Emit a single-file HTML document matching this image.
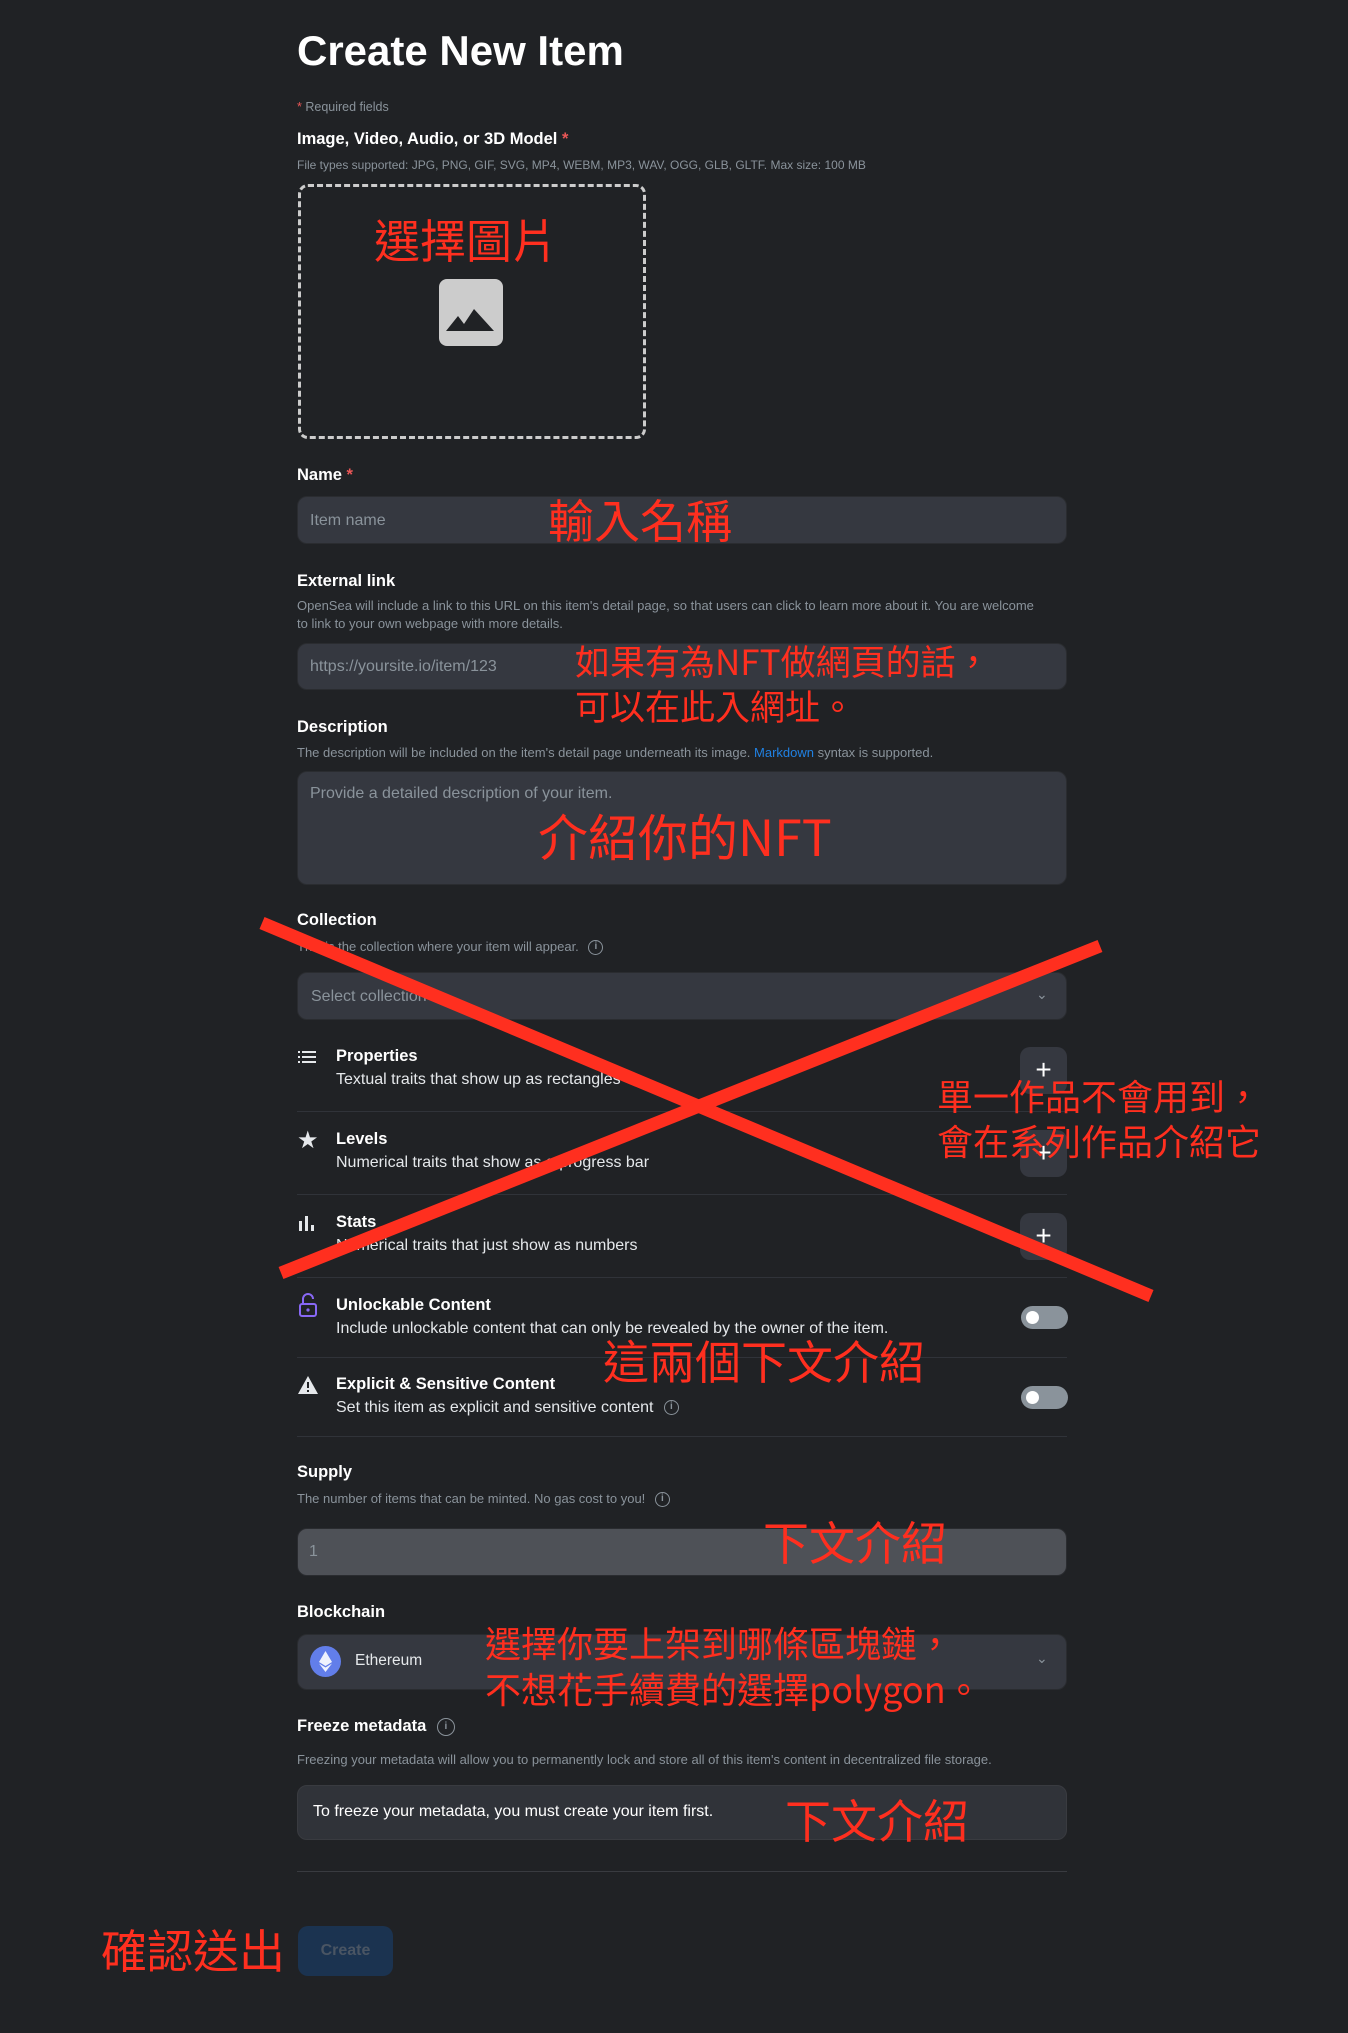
<!DOCTYPE html>
<html><head><meta charset="utf-8">
<style>
*{margin:0;padding:0;box-sizing:border-box}
body{width:1348px;height:2033px;background:#202225;position:relative;overflow:hidden;font-family:"Liberation Sans",sans-serif;color:#e5e8eb}
.a{position:absolute;white-space:nowrap}
.lbl{font-weight:bold;font-size:16.5px;color:#fff}
.sm{font-size:13px;color:#8a939b}
.inp{position:absolute;left:297px;width:770px;background:#353840;border:1px solid #2a2c30;border-radius:10px}
.ph{font-size:16px;color:#8a939b}
.red{position:absolute;white-space:nowrap;color:#ff2f1f;font-family:"Noto Sans CJK TC","Liberation Sans",sans-serif;font-weight:400;line-height:1}
.div{position:absolute;left:297px;width:770px;height:1px;background:#303339}
.rt{font-weight:bold;font-size:16.5px;color:#fff}
.rs{font-size:16px;color:#e5e8eb}
.plus{position:absolute;left:1020px;width:47px;height:47px;background:#353840;border-radius:10px;color:#fff;font-size:28px;text-align:center;line-height:45px}
.tog{position:absolute;left:1021px;width:47px;height:23px;background:#8a939b;border-radius:12px}
.tog:after{content:"";position:absolute;left:5px;top:5px;width:13px;height:13px;border-radius:50%;background:#fff}
.info{display:inline-block;width:15px;height:15px;border:1.5px solid #8a939b;border-radius:50%;font-size:10px;text-align:center;line-height:12px;color:#8a939b;vertical-align:middle;margin-left:6px;font-weight:bold}
</style></head><body>
<div class="a" style="left:297px;top:27px;font-size:42px;font-weight:bold;color:#fff">Create New Item</div>
<div class="a sm" style="left:297px;top:100px;font-size:12.5px"><span style="color:#eb5757">*</span> Required fields</div>
<div class="a lbl" style="left:297px;top:130px">Image, Video, Audio, or 3D Model <span style="color:#eb5757">*</span></div>
<div class="a sm" style="left:297px;top:158px;font-size:12px">File types supported: JPG, PNG, GIF, SVG, MP4, WEBM, MP3, WAV, OGG, GLB, GLTF. Max size: 100 MB</div>
<div class="a" style="left:298px;top:184px;width:348px;height:255px;border:3px dashed #ccc;border-radius:10px"></div>
<svg class="a" style="left:439px;top:279px" width="64" height="67" viewBox="0 0 64 67"><rect width="64" height="67" rx="8" fill="#cccccc"/><path d="M7 52 L19 37 L25 45 L35 30 L55 52 Z" fill="#202225"/></svg>
<div class="red" style="left:374px;top:216px;font-size:46px">選擇圖片</div>

<div class="a lbl" style="left:297px;top:466px">Name <span style="color:#eb5757">*</span></div>
<div class="inp" style="top:496px;height:48px"></div>
<div class="a ph" style="left:310px;top:512px">Item name</div>
<div class="red" style="left:548px;top:496px;font-size:46px">輸入名稱</div>

<div class="a lbl" style="left:297px;top:572px">External link</div>
<div class="a sm" style="left:297px;top:598px">OpenSea will include a link to this URL on this item's detail page, so that users can click to learn more about it. You are welcome</div>
<div class="a sm" style="left:297px;top:616px">to link to your own webpage with more details.</div>
<div class="inp" style="top:643px;height:47px"></div>
<div class="a ph" style="left:310px;top:658px">https://yoursite.io/item/123</div>
<div class="red" style="left:575px;top:643px;font-size:35px">如果有為NFT做網頁的話，</div>
<div class="red" style="left:575px;top:688px;font-size:35px">可以在此入網址。</div>

<div class="a lbl" style="left:297px;top:718px">Description</div>
<div class="a sm" style="left:297px;top:745px">The description will be included on the item's detail page underneath its image. <span style="color:#2081e2">Markdown</span> syntax is supported.</div>
<div class="inp" style="top:771px;height:114px"></div>
<div class="a ph" style="left:310px;top:785px">Provide a detailed description of your item.</div>
<div class="red" style="left:538px;top:810px;font-size:50px">介紹你的NFT</div>

<div class="a lbl" style="left:297px;top:911px">Collection</div>
<div class="a sm" style="left:297px;top:939px">This is the collection where your item will appear. <span class="info">i</span></div>
<div class="inp" style="top:972px;height:48px"></div>
<div class="a ph" style="left:311px;top:988px">Select collection</div>
<div class="a" style="left:1036px;top:986px;color:#8a939b;font-size:14px">&#8964;</div>

<svg class="a" style="left:298px;top:1050px" width="20" height="14"><g fill="#e5e8eb"><rect x="0" y="1" width="2" height="2"/><rect x="0" y="6" width="2" height="2"/><rect x="0" y="11" width="2" height="2"/><rect x="4" y="1" width="14" height="2"/><rect x="4" y="6" width="14" height="2"/><rect x="4" y="11" width="14" height="2"/></g></svg>
<div class="a rt" style="left:336px;top:1047px">Properties</div>
<div class="a rs" style="left:336px;top:1071px">Textual traits that show up as rectangles</div>
<div class="plus" style="top:1047px">+</div>
<div class="div" style="top:1111px"></div>

<div class="a" style="left:297px;top:1126px;font-size:24px;color:#e5e8eb">★</div>
<div class="a rt" style="left:336px;top:1130px">Levels</div>
<div class="a rs" style="left:336px;top:1154px">Numerical traits that show as a progress bar</div>
<div class="plus" style="top:1130px">+</div>
<div class="div" style="top:1194px"></div>

<svg class="a" style="left:299px;top:1215px" width="18" height="16"><g fill="#e5e8eb"><rect x="0" y="6" width="3" height="10"/><rect x="6" y="1" width="3" height="15"/><rect x="12" y="10" width="3" height="6"/></g></svg>
<div class="a rt" style="left:336px;top:1213px">Stats</div>
<div class="a rs" style="left:336px;top:1237px">Numerical traits that just show as numbers</div>
<div class="plus" style="top:1213px">+</div>
<div class="div" style="top:1277px"></div>

<svg class="a" style="left:299px;top:1293px" width="18" height="24"><path d="M4 11 V6 a5 5 0 0 1 10 0" fill="none" stroke="#8868f5" stroke-width="2"/><rect x="1" y="11" width="16" height="12" rx="2" fill="none" stroke="#8868f5" stroke-width="2"/><circle cx="9" cy="17" r="1.6" fill="#8868f5"/></svg>
<div class="a rt" style="left:336px;top:1296px">Unlockable Content</div>
<div class="a rs" style="left:336px;top:1320px">Include unlockable content that can only be revealed by the owner of the item.</div>
<div class="tog" style="top:1306px"></div>
<div class="div" style="top:1357px"></div>

<svg class="a" style="left:297px;top:1375px" width="22" height="20"><path d="M11 1 L21 19 H1 Z" fill="#e5e8eb"/><rect x="10" y="7" width="2" height="6" fill="#202225"/><rect x="10" y="15" width="2" height="2" fill="#202225"/></svg>
<div class="a rt" style="left:336px;top:1375px">Explicit &amp; Sensitive Content</div>
<div class="a rs" style="left:336px;top:1399px">Set this item as explicit and sensitive content <span class="info">i</span></div>
<div class="tog" style="top:1386px"></div>
<div class="div" style="top:1436px"></div>
<div class="red" style="left:603px;top:1337px;font-size:46px">這兩個下文介紹</div>

<div class="a lbl" style="left:297px;top:1463px">Supply</div>
<div class="a sm" style="left:297px;top:1491px">The number of items that can be minted. No gas cost to you! <span class="info">i</span></div>
<div class="inp" style="top:1528px;height:48px;background:#4e5157"></div>
<div class="a ph" style="left:309px;top:1543px">1</div>
<div class="red" style="left:763px;top:1518px;font-size:46px">下文介紹</div>

<div class="a lbl" style="left:297px;top:1603px">Blockchain</div>
<div class="inp" style="top:1634px;height:56px"></div>
<svg class="a" style="left:310px;top:1646px" width="31" height="31"><circle cx="15.5" cy="15.5" r="15.5" fill="#627eea"/><path d="M15.5 5 L9 16 L15.5 20 L22 16 Z" fill="#fff" opacity=".9"/><path d="M15.5 21.5 L9 17.5 L15.5 26 L22 17.5 Z" fill="#fff" opacity=".9"/></svg>
<div class="a" style="left:355px;top:1652px;font-size:15.5px;color:#e5e8eb">Ethereum</div>
<div class="a" style="left:1036px;top:1650px;color:#8a939b;font-size:14px">&#8964;</div>
<div class="red" style="left:485px;top:1624px;font-size:36px">選擇你要上架到哪條區塊鏈，</div>
<div class="red" style="left:485px;top:1670px;font-size:36px">不想花手續費的選擇polygon。</div>

<div class="a lbl" style="left:297px;top:1717px">Freeze metadata <span class="info" style="width:18px;height:18px;line-height:15px">i</span></div>
<div class="a sm" style="left:297px;top:1752px">Freezing your metadata will allow you to permanently lock and store all of this item's content in decentralized file storage.</div>
<div class="inp" style="top:1785px;height:55px;background:#303339;border-color:#393b40"></div>
<div class="a" style="left:313px;top:1803px;font-size:16px;color:#fff">To freeze your metadata, you must create your item first.</div>
<div class="red" style="left:785px;top:1796px;font-size:46px">下文介紹</div>
<div class="div" style="top:1871px;background:#393b40"></div>

<div class="a" style="left:298px;top:1926px;width:95px;height:50px;background:#1b3350;border-radius:10px;color:#4a5563;font-weight:bold;font-size:16px;text-align:center;line-height:50px">Create</div>
<div class="red" style="left:101px;top:1926px;font-size:46px">確認送出</div>

<svg class="a" style="left:0;top:0" width="1348" height="2033"><g stroke="#ff2f1f" stroke-width="13"><line x1="262" y1="923" x2="1151" y2="1296"/><line x1="1100" y1="946" x2="281" y2="1273"/></g></svg>
<div class="red" style="left:937px;top:1077px;font-size:36px">單一作品不會用到，</div>
<div class="red" style="left:937px;top:1122px;font-size:36px">會在系列作品介紹它</div>
</body></html>
